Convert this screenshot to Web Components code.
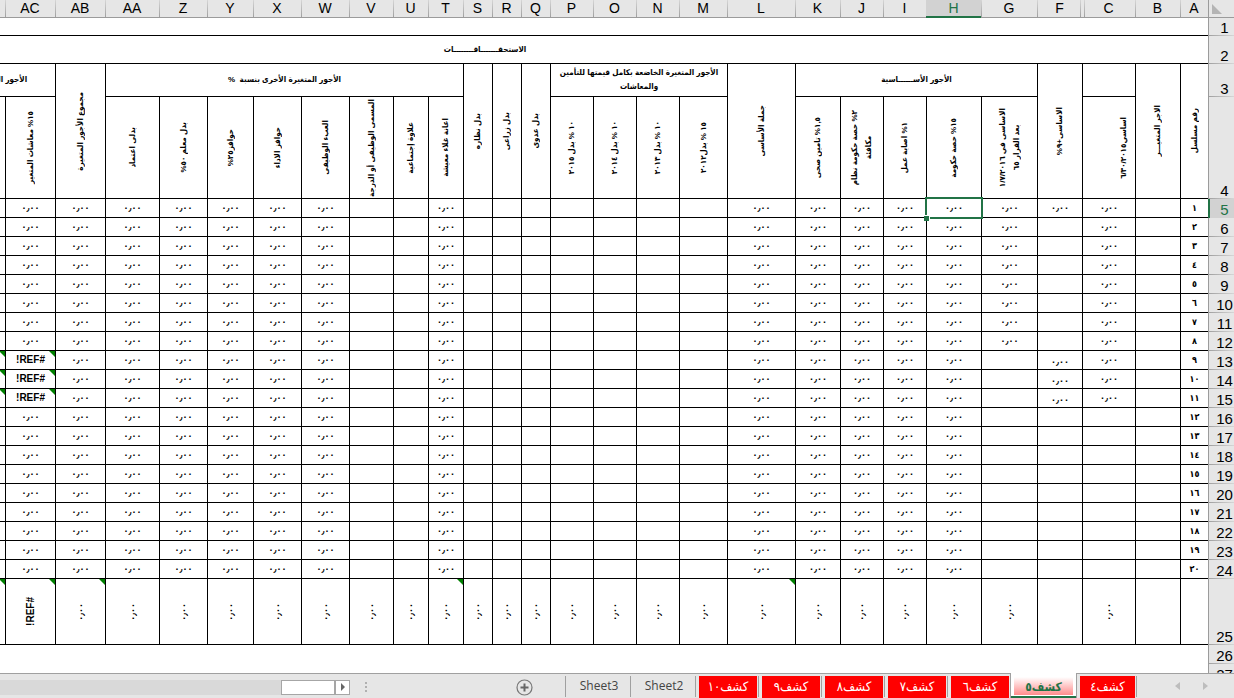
<!DOCTYPE html>
<html lang="ar">
<head>
<meta charset="utf-8">
<title>كشف٥</title>
<style>
  html, body { height: 100%; }
  body { margin: 0; background: #fff; }
</style>
</head>
<body>
<workbook-window>
  <sheet-grid></sheet-grid>
  <tab-strip slot="footer">
    <sheet-tab color="red" compact>كشف٤</sheet-tab>
    <sheet-tab color="red" active>كشف٥</sheet-tab>
    <sheet-tab color="red">كشف٦</sheet-tab>
    <sheet-tab color="red">كشف٧</sheet-tab>
    <sheet-tab color="red">كشف٨</sheet-tab>
    <sheet-tab color="red">كشف٩</sheet-tab>
    <sheet-tab color="red">كشف١٠</sheet-tab>
    <sheet-tab>Sheet2</sheet-tab>
    <sheet-tab>Sheet3</sheet-tab>
  </tab-strip>
</workbook-window>

<script>
class WorkbookWindow extends HTMLElement {
  constructor() {
    super();
    this.attachShadow({ mode: 'open' }).innerHTML = `
      <style>
        :host { display: flex; flex-direction: column; height: 100vh; overflow: hidden; }
        main { flex: 1; min-height: 0; overflow: hidden; }
      </style>
      <main><slot></slot></main>
      <slot name="footer"></slot>`;
  }
}
customElements.define('workbook-window', WorkbookWindow);

const COLUMNS = [
  ['A', 28], ['B', 45], ['C', 53], ['F', 45], ['G', 56], ['H', 55], ['I', 43], ['J', 43],
  ['K', 45], ['L', 68], ['M', 48], ['N', 43], ['O', 43], ['P', 43], ['Q', 29], ['R', 29],
  ['S', 29], ['T', 35], ['U', 35], ['V', 44], ['W', 48], ['X', 48], ['Y', 46], ['Z', 48],
  ['AA', 54], ['AB', 50], ['AC', 50], ['AD', 45], ['AE', 45], ['AF', 153]
];
const TITLES = {
  A: 'رقم مسلسل', B: 'الاجر المتغيـــر', C: 'اساسي٦/٣٠/٢٠١٥', F: 'الاساسى+٩%',
  G: 'الاساسى في ١/٧/٢٠١٦<br>بعد القرار ٦٥', H: '١٥% حصة حكومة', I: '١% اصابة عمل',
  J: '٢% حصة حكومة نظام<br>مكافئة', K: '١,٥% تامين صحى', L: 'جملة الأساسى',
  M: '١٥ % بدل٢٠١٢', N: '١٠ % بدل ٢٠١٣', O: '١٠ % بدل ٢٠١٤', P: '١٠ % بدل ٢٠١٥',
  Q: 'بدل عدوى', R: 'بدل زراعى', S: 'بدل نظاره', T: 'اعانة غلاء معيشة',
  U: 'علاوة إجتماعية', V: 'المسمى الوظيفى أو الدرجة', W: 'العبء الوظيفى',
  X: 'حوافز الاداء', Y: 'حوافز٢٥%', Z: 'بدل معلم ٥٠%', AA: 'بدلى اعتماد',
  AB: 'مجموع الأجور المتغيرة', AC: '١٥% معاشات المتغير'
};
const ZERO = '٠٫٠٠';
const ERROR = '#REF!';
const FILLED = new Set(['H', 'I', 'J', 'K', 'L', 'T', 'W', 'X', 'Y', 'Z', 'AA', 'AB', 'AC']);
const OUTER = new Set(['AD', 'AE', 'AF']);
const arabic = n => String(n).replace(/\d/g, d => '٠١٢٣٤٥٦٧٨٩'[d]);

class SheetGrid extends HTMLElement {
  constructor() {
    super();
    this.attachShadow({ mode: 'open' }).innerHTML = `
      <style>
        :host { display: block; direction: rtl; color: #000;
          font: bold 8px/14px "Liberation Sans", "DejaVu Sans Condensed", "DejaVu Sans", sans-serif; }
        table { table-layout: fixed; border-collapse: separate; border-spacing: 0; width: 1472px; }
        th, td { box-sizing: border-box; padding: 0; text-align: center; vertical-align: middle;
          font-weight: bold; white-space: nowrap; position: relative;
          border: 0 solid #000; border-width: 0 0 1px 1px; }
        td { font-size: 9px; }
        thead th { height: 18px; font: 14px/17px "Liberation Sans", sans-serif;
          background: linear-gradient(#d6d6d6, #a0a0a0) left / 1px 100% no-repeat #e6e6e6;
          border: 0; border-bottom: 1px solid #9b9b9b; }
        thead th.before { background: linear-gradient(#d6d6d6, #a0a0a0) right 1px top / 1px 100% no-repeat,
          linear-gradient(#d6d6d6, #a0a0a0) left / 1px 100% no-repeat #e6e6e6; }
        thead th.after { background: linear-gradient(#d6d6d6, #a0a0a0) 2px 0 / 1px 100% no-repeat #e6e6e6; }
        thead th.on { background: #d2d2d2; color: #217346; border-color: #217346; box-shadow: inset 0 -1px #217346; }
        thead th.corner { background: #e6e6e6; border-left: 1px solid #9b9b9b; }
        .corner svg { display: block; margin-right: auto; margin-left: 3px; }
        tbody th.num { font: 15px/17px "Liberation Sans", sans-serif; vertical-align: bottom;
          padding-left: 6px; border: 0; border-left: 1px solid #9b9b9b;
          background: linear-gradient(to right, #a0a0a0, #d6d6d6) bottom / 100% 1px no-repeat #e6e6e6; }
        tbody th.num.on { background: #d2d2d2; color: #217346; border-left: 2px solid #217346; padding-left: 5px; }
        .open { border-width: 0; }
        .line { border-left-width: 0; }
        .low { vertical-align: bottom; }
        .turn { display: inline-block; writing-mode: vertical-rl; transform: rotate(180deg);
          vertical-align: middle; text-align: center; }
        th.side { text-align: right; padding-right: 4px; }
        .flag::after { content: ""; position: absolute; top: 0; right: 0; width: 6px; height: 6px;
          background: #008000; clip-path: polygon(0 0, 100% 0, 100% 100%); }
        .pick { position: absolute; inset: -2px; border: 2px solid #217346; z-index: 2; }
        .pick::after { content: ""; position: absolute; left: -3px; bottom: -4px; width: 5px; height: 5px;
          background: #217346; border: solid #fff; border-width: 1px 1px 0 0; }
        .err { font: bold 10px/14px "Liberation Sans", sans-serif; }
      </style>
      <table><colgroup></colgroup><thead></thead><tbody></tbody></table>`;
    const root = this.shadowRoot;
    const names = COLUMNS.map(c => c[0]);
    root.querySelector('colgroup').innerHTML =
      '<col style="width:26px">' + COLUMNS.map(c => `<col style="width:${c[1]}px">`).join('');

    const mark = { H: 'on', F: 'before', C: 'after' };
    root.querySelector('thead').innerHTML = `<tr><th class="corner" aria-label="Select all">
        <svg width="10" height="10" viewBox="0 0 10 10"><path d="M0 0V10H10Z" fill="#b4b4b4"/></svg></th>` +
      names.map(n => `<th scope="col" class="${mark[n] || ''}">${OUTER.has(n) ? '' : n}</th>`).join('') + '</tr>';

    const row = (n, height, cells) =>
      `<tr style="height:${height}px"><th scope="row" class="num ${n === 5 ? 'on' : ''}">${n}</th>${cells}</tr>`;
    const turned = t => `<span class="turn">${t}</span>`;
    const tall = n => `<th rowspan="2">${turned(TITLES[n] || '')}</th>`;
    const short = n => `<th class="${n === 'C' ? 'side' : ''}">${turned(TITLES[n] || '')}</th>`;

    let body = row(1, 18, '<td class="line" colspan="30"></td>');
    body += row(2, 28, '<th class="line" colspan="30">الاستحقـــــــاقــــــــات</th>');
    body += row(3, 33,
      tall('A') + tall('B') + '<th></th>' + tall('F') +
      '<th colspan="5">الأجور الأســــــاسية</th>' + tall('L') +
      '<th colspan="4">الأجور المتغيرة الخاضعة بكامل قيمتها للتأمين<br>والمعاشات</th>' +
      tall('Q') + tall('R') + tall('S') +
      '<th colspan="8">الأجور المتغيرة الأخرى بنسبة &nbsp;%</th>' + tall('AB') +
      '<th colspan="3">الأجور المتغيرة الخاضعة</th>' + tall('AF'));
    body += row(4, 102, ['C', 'G', 'H', 'I', 'J', 'K', 'M', 'N', 'O', 'P', 'T', 'U', 'V', 'W',
      'X', 'Y', 'Z', 'AA', 'AC', 'AD', 'AE'].map(short).join(''));

    for (let r = 5; r <= 24; r++) {
      const broken = r >= 13 && r <= 15;
      body += row(r, 19, names.map(n => {
        let text = '', cls = '';
        if (n === 'A') text = arabic(r - 4);
        else if (FILLED.has(n) || (n === 'C' && r <= 15) || (n === 'G' && r <= 12) ||
                 (n === 'F' && (r === 5 || broken))) text = ZERO;
        if (n === 'F' && broken) cls = 'low';
        if (n === 'AC' && broken) { text = ERROR; cls = 'flag err'; }
        if (n === 'AD' && broken) cls = 'flag';
        if (n === 'H' && r === 5) text += '<span class="pick"></span>';
        return `<td class="${cls}">${text}</td>`;
      }).join(''));
    }
    body += row(25, 66, names.map(n => {
      const blank = ['A', 'B', 'F', 'AD', 'AE', 'AF'].includes(n);
      const flag = ['L', 'T', 'AB', 'AC', 'AD'].includes(n) ? 'flag' : '';
      return `<td class="${flag} ${n === 'AC' ? 'err' : ''}">${blank ? '' : turned(n === 'AC' ? ERROR : ZERO)}</td>`;
    }).join(''));
    body += row(26, 19, '<td class="open" colspan="30"></td>');
    body += row(27, 19, '<td class="open" colspan="30"></td>');
    root.querySelector('tbody').innerHTML = body;
  }
}
customElements.define('sheet-grid', SheetGrid);

class SheetTab extends HTMLElement {
  constructor() {
    super();
    this.attachShadow({ mode: 'open' }).innerHTML = `
      <style>
        :host { display: flex; padding-top: 2px; padding-right: 1px; padding-left: 3px; border-left: 1px solid #a0a0a0;
          border-image: linear-gradient(transparent 3px, #a0a0a0 3px, #a0a0a0 22px, transparent 22px) 1; }
        button { box-sizing: border-box; width: 60px; padding: 0 0 2px; border: 0; background: none; color: #444;
          font: 12px/20px "Open Sans", "DejaVu Sans Condensed", "DejaVu Sans", sans-serif; }
        :host([color=red]) button { width: 58px; background: red; color: #fff; font-size: 13px; }
        :host([compact]) button { width: 55px; }
        :host([active]) { padding: 0; border: 0; border-image: none; margin-right: -1px; margin-top: -1px; position: relative; }
        :host([active][color=red]) button { width: 67px; padding: 4px 3px 3px; color: #217346; font-weight: bold; font-size: 12px;
          background: linear-gradient(#fff, #ff8c8c) content-box, #fff;
          border: solid #a0a0a0; border-width: 0 1px; box-shadow: inset 0 -2px #217346; }
      </style>
      <button type="button"><slot></slot></button>`;
  }
}
customElements.define('sheet-tab', SheetTab);

class ScrollBar extends HTMLElement {
  constructor() {
    super();
    this.attachShadow({ mode: 'open' }).innerHTML = `
      <style>
        :host { display: flex; direction: ltr; height: 15px; background: #d9d9d9; }
        span, button { box-sizing: border-box; height: 15px; background: #fff; border: 1px solid #a6a6a6; padding: 0; }
        span { width: 54px; margin-left: auto; }
        button { width: 15px; display: flex; align-items: center; justify-content: center; }
      </style>
      <span></span>
      <button type="button" aria-label="Scroll right"><svg width="4" height="8"><path d="M0 0L4 4L0 8Z" fill="#666"/></svg></button>`;
  }
}
customElements.define('scroll-bar', ScrollBar);

class TabStrip extends HTMLElement {
  constructor() {
    super();
    this.attachShadow({ mode: 'open' }).innerHTML = `
      <style>
        :host { display: flex; direction: rtl; box-sizing: border-box; height: 25px; flex: none;
          background: #e6e6e6; border-top: 1px solid #a0a0a0; }
        nav { box-sizing: border-box; width: 98px; display: flex; align-items: center; justify-content: center;
          gap: 16px; padding-left: 12px; border-left: 1px solid #a0a0a0;
          border-image: linear-gradient(transparent 3px, #a0a0a0 3px, #a0a0a0 22px, transparent 22px) 1; }
        button { border: 0; background: none; padding: 0; display: flex; }
        nav button { width: 12px; justify-content: center; }
        .add { align-self: center; margin: 2px 32px 0 0; }
        .grip { align-self: center; display: grid; gap: 2px; margin: 2px 149px 0 15px; }
        .grip i { width: 2px; height: 2px; background: #b0b0b0; }
        scroll-bar { flex: 1; align-self: center; margin-top: 2px; }
      </style>
      <nav>
        <button type="button" aria-label="Next sheet"><svg width="5" height="8"><path d="M0 0L5 4L0 8Z" fill="#bdbdbd"/></svg></button>
        <button type="button" aria-label="Previous sheet"><svg width="5" height="8"><path d="M5 0L0 4L5 8Z" fill="#bdbdbd"/></svg></button>
      </nav>
      <slot></slot>
      <button class="add" type="button" aria-label="New sheet"><svg width="17" height="17" viewBox="0 0 17 17" fill="none">
        <circle cx="8.5" cy="8.5" r="7.5" stroke="#777" stroke-width="1.2"/><path d="M8.5 4.5V12.5M4.5 8.5H12.5" stroke="#666" stroke-width="2"/></svg></button>
      <div class="grip"><i></i><i></i><i></i></div>
      <scroll-bar></scroll-bar>`;
  }
}
customElements.define('tab-strip', TabStrip);
</script>
</body>
</html>
